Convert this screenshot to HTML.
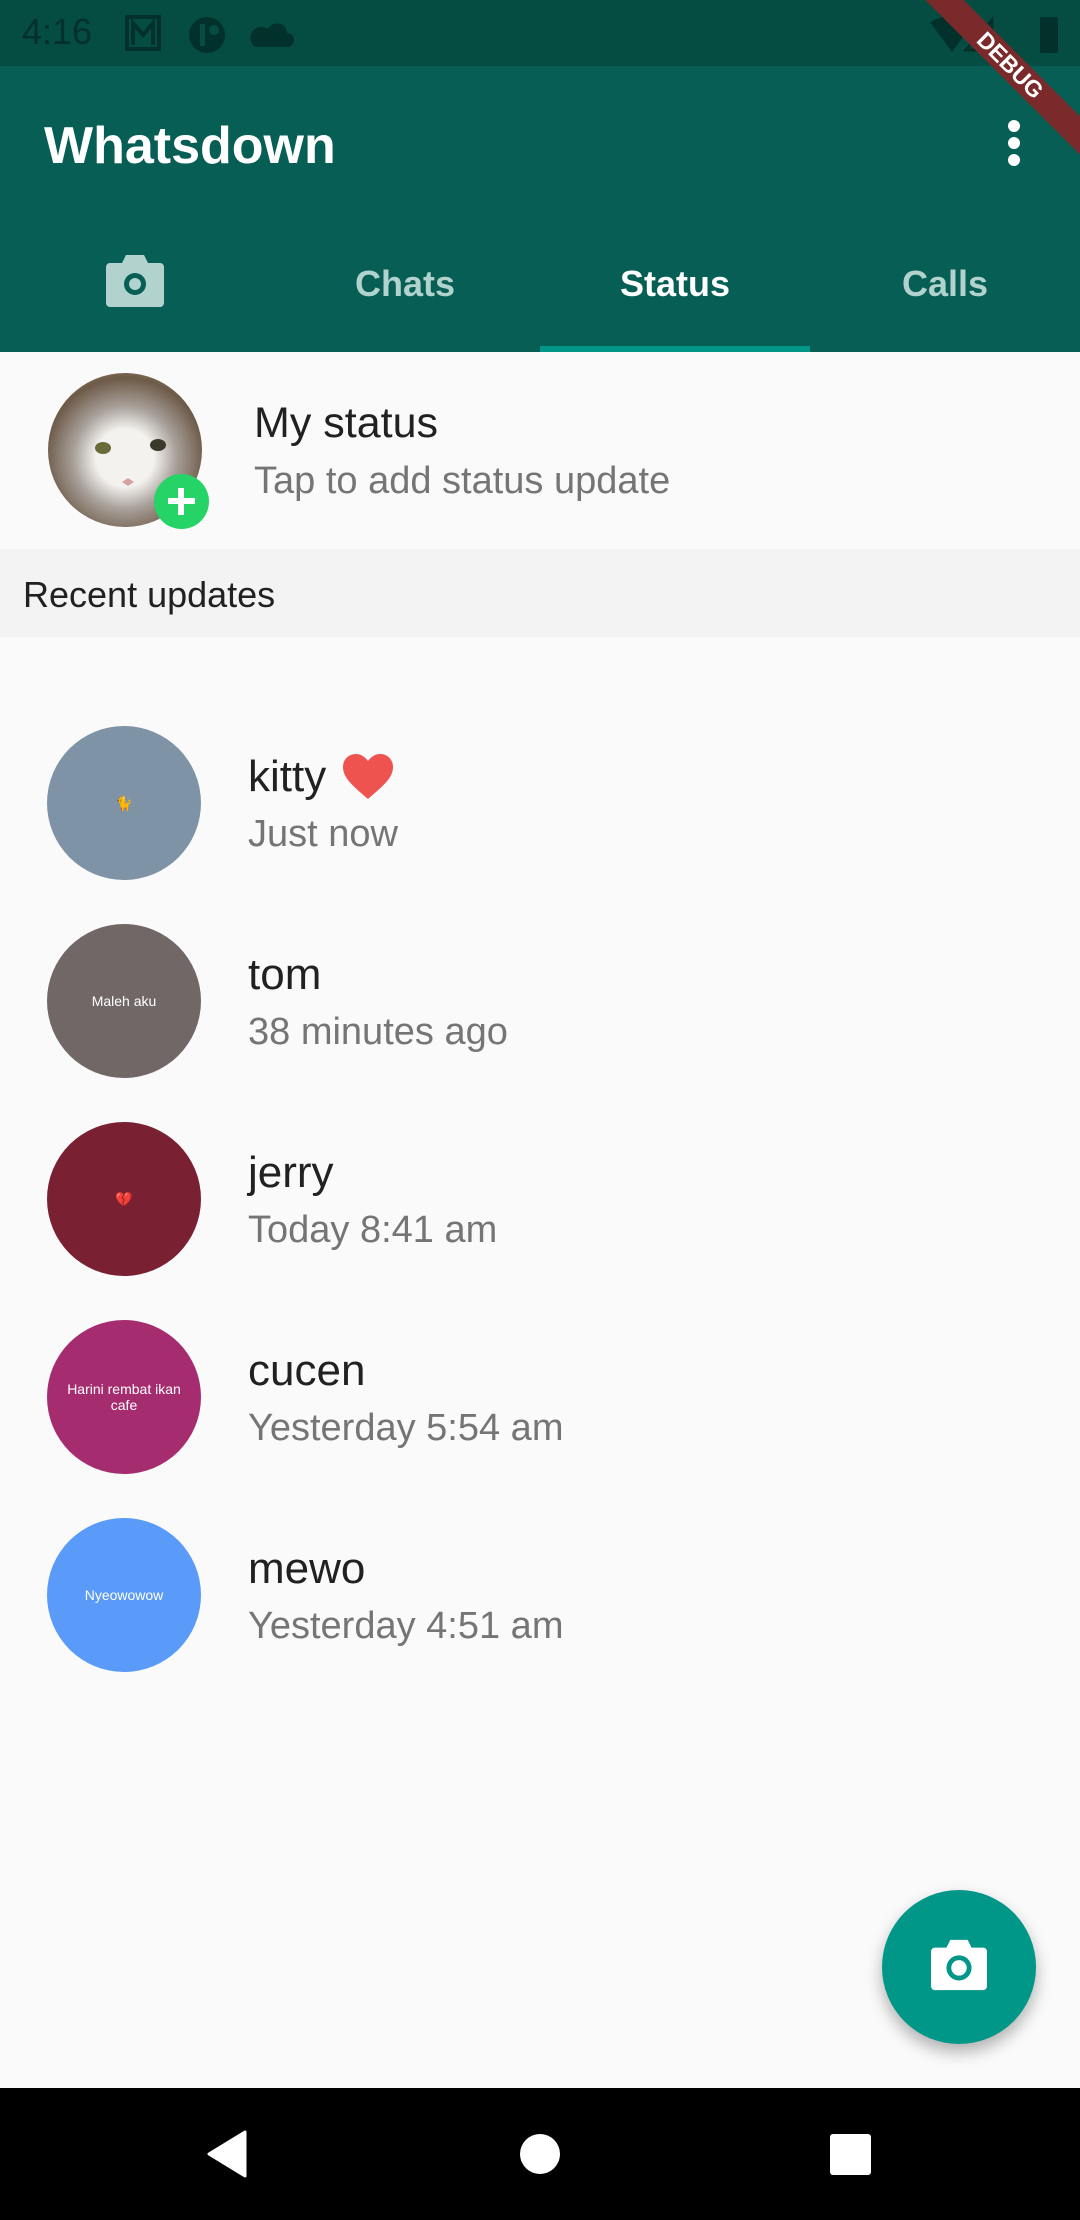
<!DOCTYPE html>
<html><head><meta charset="utf-8"><style>
*{margin:0;padding:0;box-sizing:border-box}
body{width:1080px;height:2220px;background:#fafafa;font-family:"Liberation Sans","Noto Sans CJK SC",sans-serif;position:relative;overflow:hidden}
.abs{position:absolute}
.sb{left:0;top:0;width:1080px;height:66px;background:#054c43}
.ab{left:0;top:66px;width:1080px;height:286px;background:#075e54}
.t{white-space:nowrap;line-height:1}
.av{position:absolute;width:154px;height:154px;border-radius:50%;left:47px;color:#fff;display:flex;align-items:center;justify-content:center;text-align:center;font-size:14px}
.nm{left:248px;font-size:44px;color:#212121}
.sub{left:248px;font-size:38px;color:#757575}
</style></head><body>
<div class="abs sb"></div>
<div class="abs t" style="left:22px;top:14px;font-size:36px;color:#02302a">4:16</div>
<svg class="abs" style="left:125px;top:15px" width="170" height="40" viewBox="0 0 170 40">
<rect x="2" y="2" width="32" height="32" fill="none" stroke="#02302a" stroke-width="4"/><path d="M8 30V8l10 12 10-12v22" fill="none" stroke="#02302a" stroke-width="4"/>
<circle cx="82" cy="20" r="18" fill="#02302a"/><rect x="75" y="9" width="5" height="22" fill="#054c43"/><circle cx="89" cy="15" r="5" fill="#054c43"/>
<path d="M130 32h32a7 7 0 0 0 0-14 10 10 0 0 0-19-4 8 8 0 0 0-13 18z" fill="#02302a"/>
</svg>
<svg class="abs" style="left:930px;top:14px" width="130" height="40"><path d="M0 8 Q22-4 44 8 L22 38Z" fill="#02302a"/><path d="M62 36V6L36 36Z" fill="none" stroke="#02302a" stroke-width="3"/><rect x="110" y="3" width="18" height="36" rx="2" fill="#02302a"/></svg>
<div class="abs ab"></div>
<div class="abs t" style="left:44px;top:120px;font-size:52px;color:#fff;font-weight:bold">Whatsdown</div>
<svg class="abs" style="left:1002px;top:118px" width="24" height="50"><circle cx="12" cy="8" r="6" fill="#fff"/><circle cx="12" cy="25" r="6" fill="#fff"/><circle cx="12" cy="42" r="6" fill="#fff"/></svg>
<svg class="abs" style="left:106px;top:255px" width="58" height="52" viewBox="0 0 58 52"><path d="M4 8h12l4-8h18l4 8h12a4 4 0 0 1 4 4v36a4 4 0 0 1-4 4H4a4 4 0 0 1-4-4V12a4 4 0 0 1 4-4z" fill="#b2d2ce"/><circle cx="29" cy="29" r="11" fill="#075e54"/><circle cx="29" cy="29" r="6" fill="#b2d2ce"/></svg>
<div class="abs t" style="left:270px;top:266px;width:270px;text-align:center;font-size:36px;font-weight:bold;color:#b2d2ce">Chats</div>
<div class="abs t" style="left:540px;top:266px;width:270px;text-align:center;font-size:36px;font-weight:bold;color:#fff">Status</div>
<div class="abs t" style="left:810px;top:266px;width:270px;text-align:center;font-size:36px;font-weight:bold;color:#b2d2ce">Calls</div>
<div class="abs" style="left:540px;top:346px;width:270px;height:6px;background:#009688"></div>
<div class="abs t" style="left:880px;top:52px;width:260px;height:27px;background:#7a2a2a;transform:rotate(45deg);color:#fff;font-size:23px;font-weight:bold;text-align:center;line-height:27px">DEBUG</div>

<div class="av" style="left:48px;top:373px;background:radial-gradient(circle at 50% 55%,#f4f2ef 0 25%,#a8a09a 45%,#6d5a48 70%,#c9b07a 100%)"><svg width="154" height="154"><ellipse cx="55" cy="75" rx="8" ry="6" fill="#6b6b3a"/><ellipse cx="110" cy="72" rx="8" ry="6" fill="#3a3a2a"/><path d="M80 105l6 4-6 4-6-4z" fill="#d9a0a0"/></svg></div>
<div class="abs" style="left:154px;top:474px;width:55px;height:55px;border-radius:50%;background:#25d366"></div>
<div class="abs" style="left:168px;top:498px;width:27px;height:6px;background:#fff"></div>
<div class="abs" style="left:178px;top:488px;width:6px;height:27px;background:#fff"></div>
<div class="abs t" style="left:254px;top:402px;font-size:43px;color:#212121">My status</div>
<div class="abs t" style="left:254px;top:462px;font-size:38px;color:#757575">Tap to add status update</div>
<div class="abs" style="left:0;top:549px;width:1080px;height:88px;background:#f3f3f3"></div>
<div class="abs t" style="left:23px;top:577px;font-size:36px;color:#212121">Recent updates</div>

<div class="av" style="top:726px;background:#7f93a6">🐈</div>
<div class="abs t nm" style="top:755px">kitty</div>
<svg class="abs" style="left:343px;top:754px" width="50" height="46" viewBox="0 0 50 46"><path d="M25 45C10 32 0 24 0 13 0 5 6 0 13 0c5 0 9 3 12 7 3-4 7-7 12-7 7 0 13 5 13 13 0 11-10 19-25 32z" fill="#ef5350"/></svg>
<div class="abs t sub" style="top:815px">Just now</div>
<div class="av" style="top:924px;background:#716767">Maleh aku</div>
<div class="abs t nm" style="top:953px">tom</div>
<div class="abs t sub" style="top:1013px">38 minutes ago</div>
<div class="av" style="top:1122px;background:#7a2033">💔</div>
<div class="abs t nm" style="top:1151px">jerry</div>
<div class="abs t sub" style="top:1211px">Today 8:41 am</div>
<div class="av" style="top:1320px;background:#a52c6f;padding:0 8px">Harini rembat ikan cafe</div>
<div class="abs t nm" style="top:1349px">cucen</div>
<div class="abs t sub" style="top:1409px">Yesterday 5:54 am</div>
<div class="av" style="top:1518px;background:#5a9af8">Nyeowowow</div>
<div class="abs t nm" style="top:1547px">mewo</div>
<div class="abs t sub" style="top:1607px">Yesterday 4:51 am</div>

<div class="abs" style="left:882px;top:1890px;width:154px;height:154px;border-radius:50%;background:#009688;box-shadow:0 8px 16px rgba(0,0,0,.3)"></div>
<svg class="abs" style="left:931px;top:1939px" width="56" height="52" viewBox="0 0 58 52"><path d="M4 8h12l4-8h18l4 8h12a4 4 0 0 1 4 4v36a4 4 0 0 1-4 4H4a4 4 0 0 1-4-4V12a4 4 0 0 1 4-4z" fill="#fff"/><circle cx="29" cy="29" r="13" fill="#009688"/><circle cx="29" cy="29" r="8" fill="#fff"/></svg>

<div class="abs" style="left:0;top:2088px;width:1080px;height:132px;background:#000"></div>
<svg class="abs" style="left:205px;top:2130px" width="42" height="48"><path d="M40 2V46L4 24Z" fill="#fff" stroke="#fff" stroke-width="3" stroke-linejoin="round"/></svg>
<div class="abs" style="left:520px;top:2134px;width:40px;height:40px;border-radius:50%;background:#fff"></div>
<div class="abs" style="left:830px;top:2134px;width:41px;height:41px;border-radius:3px;background:#fff"></div>
</body></html>
